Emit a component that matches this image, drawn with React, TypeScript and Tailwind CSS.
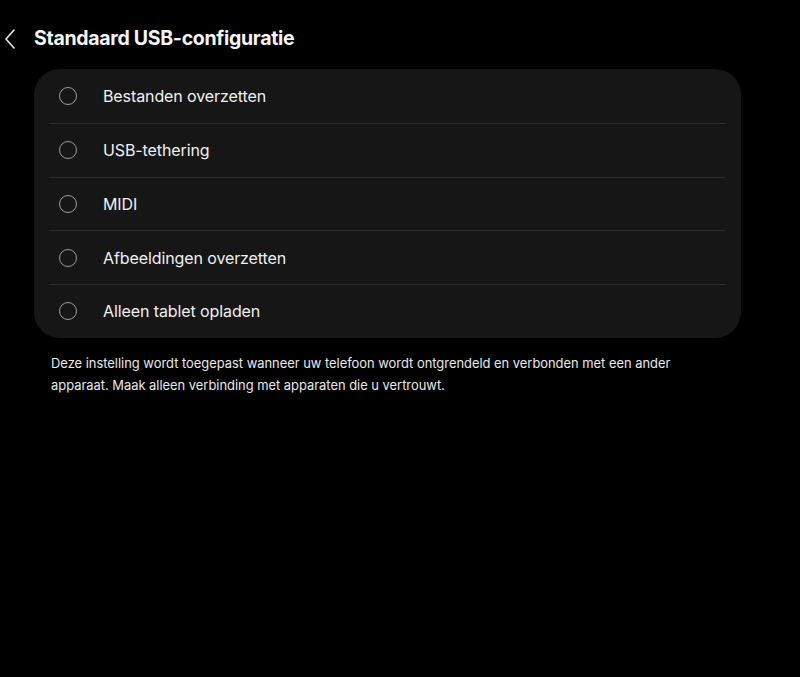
import React from "react";

const options = [
  "Bestanden overzetten",
  "USB-tethering",
  "MIDI",
  "Afbeeldingen overzetten",
  "Alleen tablet opladen",
];

export default function App() {
  return (
    <div
      className="w-[800px] h-[677px] bg-black text-white"
      style={{ fontFamily: "Inter, Roboto, 'Noto Sans', sans-serif" }}
    >
      <div className="flex items-center h-[40px] pt-[19px] box-content">
        <svg width="12" height="20" viewBox="0 0 12 20" className="ml-[4px]">
          <path d="M10 1 L2 10 L10 19" fill="none" stroke="#e6e6e6" strokeWidth="1.6" strokeLinecap="round" strokeLinejoin="round" />
        </svg>
        <h1 className="ml-[18px] text-[19.5px] font-bold tracking-[-0.3px] text-[#f5f5f5]">
          Standaard USB-configuratie
        </h1>
      </div>
      <div className="ml-[34px] mt-[10px] w-[707px] rounded-[26px] bg-[#161616] px-[15px] pt-[0.5px] pb-[0.5px]">
        {options.map((o, i) => (
          <div
            key={o}
            className={`flex items-center h-[53.6px] ${i > 0 ? "border-t border-[#2a2a2a]" : ""}`}
          >
            <div className="ml-[10px] w-[18px] h-[18px] rounded-full border-[1.5px] border-[#9a9a9a]" />
            <span className="ml-[26px] text-[16px] tracking-[-0.1px] text-[#f0f0f0]">{o}</span>
          </div>
        ))}
      </div>
      <p className="ml-[51px] mt-[15px] w-[680px] text-[12.9px] leading-[22px] text-[#e8e8e8]">
        Deze instelling wordt toegepast wanneer uw telefoon wordt ontgrendeld en verbonden met een ander apparaat. Maak alleen verbinding met apparaten die u vertrouwt.
      </p>
    </div>
  );
}
